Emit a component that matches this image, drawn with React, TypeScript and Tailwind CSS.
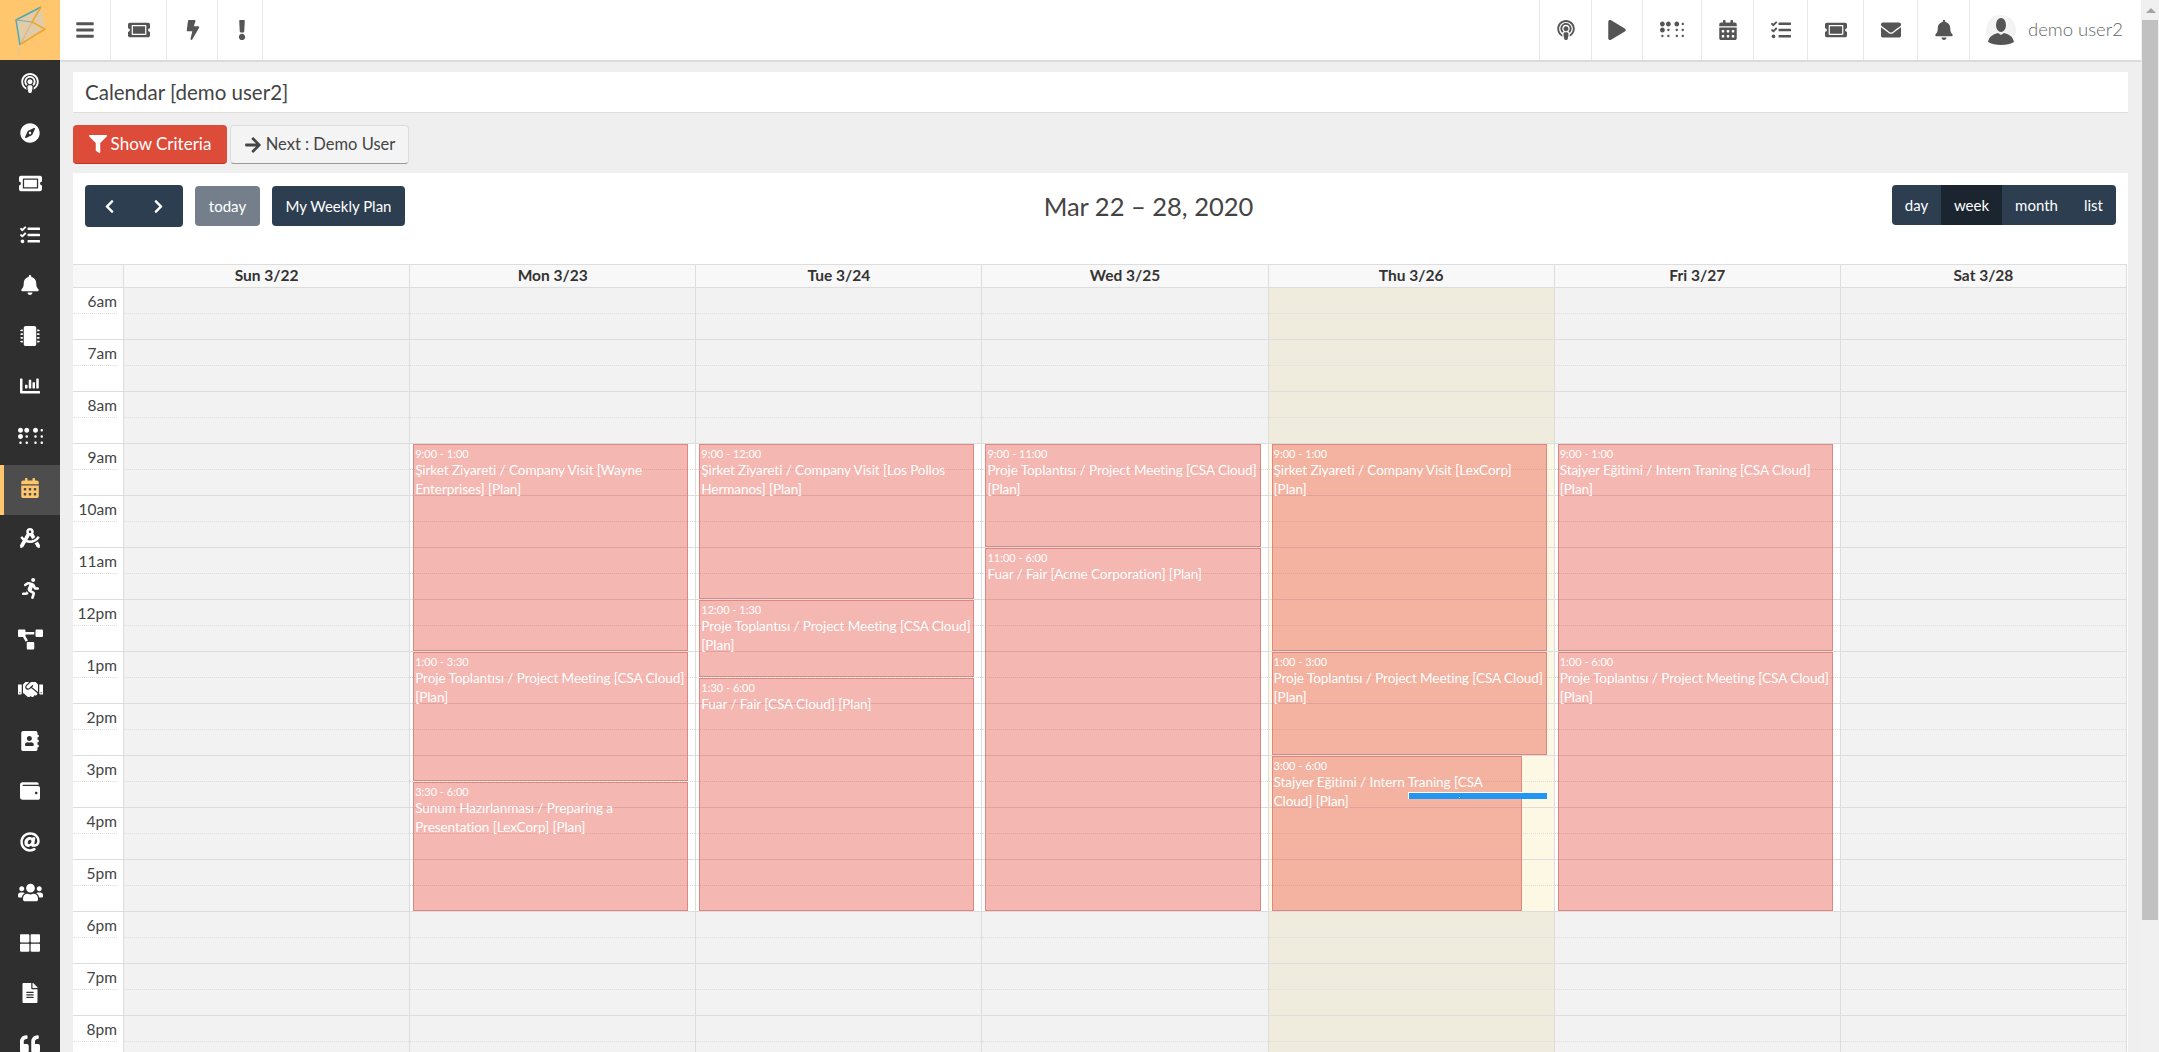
import React from "react";
import {
  FaAddressBook,
  FaArrowRight,
  FaAt,
  FaBars,
  FaBell,
  FaBolt,
  FaBraille,
  FaCalendarAlt,
  FaChartBar,
  FaChevronLeft,
  FaChevronRight,
  FaCompass,
  FaDraftingCompass,
  FaEnvelope,
  FaExclamation,
  FaFileAlt,
  FaFilter,
  FaHandshake,
  FaMicrochip,
  FaPlay,
  FaPodcast,
  FaProjectDiagram,
  FaQuoteLeft,
  FaRunning,
  FaTasks,
  FaThLarge,
  FaTicketAlt,
  FaUsers,
  FaWallet,
} from "react-icons/fa";

const HOUR = 52;

const sideIcons = [
  { Icon: FaPodcast, size: 20 },
  { Icon: FaCompass, size: 20 },
  { Icon: FaTicketAlt, size: 23 },
  { Icon: FaTasks, size: 20 },
  { Icon: FaBell, size: 20 },
  { Icon: FaMicrochip, size: 20 },
  { Icon: FaChartBar, size: 20 },
  { Icon: FaBraille, size: 25 },
  { Icon: FaCalendarAlt, size: 20 },
  { Icon: FaDraftingCompass, size: 20 },
  { Icon: FaRunning, size: 21 },
  { Icon: FaProjectDiagram, size: 25 },
  { Icon: FaHandshake, size: 25 },
  { Icon: FaAddressBook, size: 20 },
  { Icon: FaWallet, size: 20 },
  { Icon: FaAt, size: 20 },
  { Icon: FaUsers, size: 25 },
  { Icon: FaThLarge, size: 20 },
  { Icon: FaFileAlt, size: 20 },
  { Icon: FaQuoteLeft, size: 20 },
];

const rightIcons = [
  { Icon: FaPodcast, size: 20, w: 52 },
  { Icon: FaPlay, size: 20, w: 51 },
  { Icon: FaBraille, size: 24, w: 59 },
  { Icon: FaCalendarAlt, size: 20, w: 52 },
  { Icon: FaTasks, size: 20, w: 54 },
  { Icon: FaTicketAlt, size: 22, w: 56 },
  { Icon: FaEnvelope, size: 20, w: 54 },
  { Icon: FaBell, size: 20, w: 52 },
];

const hours = ["6am", "7am", "8am", "9am", "10am", "11am", "12pm", "1pm", "2pm", "3pm", "4pm", "5pm", "6pm", "7pm", "8pm"];

type Ev = { start: number; end: number; time: string; title: string; narrow?: boolean };
type Day = { label: string; business?: boolean; today?: boolean; events?: Ev[] };

const meeting = "Proje Toplantısı / Project Meeting [CSA Cloud]\n[Plan]";

const days: Day[] = [
  { label: "Sun 3/22" },
  {
    label: "Mon 3/23",
    business: true,
    events: [
      { start: 9, end: 13, time: "9:00 - 1:00", title: "Şirket Ziyareti / Company Visit [Wayne\nEnterprises] [Plan]" },
      { start: 13, end: 15.5, time: "1:00 - 3:30", title: meeting },
      { start: 15.5, end: 18, time: "3:30 - 6:00", title: "Sunum Hazırlanması / Preparing a\nPresentation [LexCorp] [Plan]" },
    ],
  },
  {
    label: "Tue 3/24",
    business: true,
    events: [
      { start: 9, end: 12, time: "9:00 - 12:00", title: "Şirket Ziyareti / Company Visit [Los Pollos\nHermanos] [Plan]" },
      { start: 12, end: 13.5, time: "12:00 - 1:30", title: meeting },
      { start: 13.5, end: 18, time: "1:30 - 6:00", title: "Fuar / Fair [CSA Cloud] [Plan]" },
    ],
  },
  {
    label: "Wed 3/25",
    business: true,
    events: [
      { start: 9, end: 11, time: "9:00 - 11:00", title: meeting },
      { start: 11, end: 18, time: "11:00 - 6:00", title: "Fuar / Fair [Acme Corporation] [Plan]" },
    ],
  },
  {
    label: "Thu 3/26",
    business: true,
    today: true,
    events: [
      { start: 9, end: 13, time: "9:00 - 1:00", title: "Şirket Ziyareti / Company Visit [LexCorp]\n[Plan]" },
      { start: 13, end: 15, time: "1:00 - 3:00", title: meeting },
      { start: 15, end: 18, time: "3:00 - 6:00", title: "Stajyer Eğitimi / Intern Traning [CSA\nCloud] [Plan]", narrow: true },
    ],
  },
  {
    label: "Fri 3/27",
    business: true,
    events: [
      { start: 9, end: 13, time: "9:00 - 1:00", title: "Stajyer Eğitimi / Intern Traning [CSA Cloud]\n[Plan]" },
      { start: 13, end: 18, time: "1:00 - 6:00", title: meeting },
    ],
  },
  { label: "Sat 3/28" },
];

function Logo() {
  return (
    <svg width="60" height="60" viewBox="0 0 60 60" fill="none">
      <path d="M41 7 16 20 20 45 45 29Z" fill="#d8cdb8" fillOpacity="0.8" />
      <path d="M45 29 20 45 18 57" stroke="#e6c79a" strokeWidth="1.5" />
      <path d="M32 22 20 45" stroke="#d9b98c" strokeWidth="1.5" />
      <path d="M41 7 16 20 20 45" stroke="#4fa8b5" strokeWidth="1.5" />
      <path d="M16 20 32 22" stroke="#8fa89a" strokeWidth="1.2" />
      <path d="M41 7 32 22 45 29 21 44" stroke="#f0a526" strokeWidth="1.5" />
    </svg>
  );
}

function Avatar() {
  return (
    <svg width="30" height="30" viewBox="0 0 30 30">
      <circle cx="15" cy="15" r="15" fill="#f3f3f3" />
      <ellipse cx="15" cy="10" rx="5" ry="7" fill="#555" />
      <path d="M2 27c1-6 6-8 10-9l3 2 3-2c4 1 9 3 10 9-3 2-8 3-13 3s-10-1-13-3Z" fill="#555" />
    </svg>
  );
}

function Sidebar() {
  return (
    <aside className="flex w-[60px] shrink-0 flex-col bg-[#2f2f2f]">
      <div className="h-[60px] shrink-0 bg-[#ffc66d]">
        <Logo />
      </div>
      {sideIcons.map(({ Icon, size }, i) => (
        <div
          key={i}
          className={
            i === 8
              ? "flex h-[50.6px] shrink-0 items-center justify-center border-l-4 border-[#ffc66d] bg-[#4d4d4d] pr-1 pb-[5px] text-[#ffc66d]"
              : "flex h-[50.6px] shrink-0 items-center justify-center pb-[5px] text-white"
          }
        >
          <Icon size={size} />
        </div>
      ))}
    </aside>
  );
}

function TopBar() {
  return (
    <header className="flex h-[62px] shrink-0 items-stretch border-b-2 border-[#dcdcdc] bg-white text-[#555]">
      <div className="flex h-[60px] w-[51px] items-center justify-center border-r border-[#e8e8e8]">
        <FaBars size={20} />
      </div>
      <div className="flex h-[60px] w-[56px] items-center justify-center border-r border-[#e8e8e8]">
        <FaTicketAlt size={22} />
      </div>
      <div className="flex h-[60px] w-[51px] items-center justify-center border-r border-[#e8e8e8] pl-[2px]">
        <FaBolt size={20} />
      </div>
      <div className="flex h-[60px] w-[45px] items-center justify-center border-r border-[#e8e8e8] pl-[4px]">
        <FaExclamation size={20} />
      </div>
      <div className="flex-1" />
      <div className="flex h-[60px] border-l border-[#e8e8e8]">
        {rightIcons.map(({ Icon, size, w }, i) => (
          <div key={i} className="flex items-center justify-center border-r border-[#e8e8e8]" style={{ width: w }}>
            <Icon size={size} />
          </div>
        ))}
        <div className="flex w-[171px] items-center gap-[12px] pl-[16px]">
          <Avatar />
          <span className="text-[18.5px] font-light text-[#666]">demo user2</span>
        </div>
      </div>
    </header>
  );
}

function Toolbar() {
  return (
    <div className="flex h-[91px] items-start justify-between pl-3 pr-[11px] pt-3">
      <div className="flex items-center gap-3">
        <div className="flex h-[42px] w-[98px] items-center rounded bg-[#2c3e50] text-white">
          <span className="flex w-[49px] justify-center"><FaChevronLeft size={15} /></span>
          <span className="flex w-[49px] justify-center"><FaChevronRight size={15} /></span>
        </div>
        <div className="flex h-10 w-[65px] items-center justify-center rounded bg-[#757f8b] text-[15px] text-white">today</div>
        <div className="flex h-10 w-[133px] items-center justify-center rounded bg-[#2c3e50] text-[15px] text-white">My Weekly Plan</div>
      </div>
      <h2 className="pt-[2px] text-[25.5px] leading-[38px] text-[#444]">Mar 22 – 28, 2020</h2>
      <div className="flex h-10 items-center overflow-hidden rounded bg-[#2c3e50] text-[15px] text-white">
        <span className="flex h-full w-[49px] items-center justify-center">day</span>
        <span className="flex h-full w-[61px] items-center justify-center bg-[#1a252f]">week</span>
        <span className="flex h-full w-[69px] items-center justify-center">month</span>
        <span className="flex h-full w-[45px] items-center justify-center">list</span>
      </div>
    </div>
  );
}

function Slots({ business, today }: { business?: boolean; today?: boolean }) {
  return (
    <>
      {hours.map((h, i) => {
        const open = business && i >= 3 && i < 12;
        let bg = open ? "bg-white" : "bg-[#f2f2f2]";
        if (today) bg = open ? "bg-[#fcf8e3]" : "bg-[#f0ecdd]";
        return (
          <div key={h} className={"h-[52px] border-b border-[#dddddd] " + bg}>
            <div className="h-[26px] border-b border-dotted border-[#dddddd]" />
          </div>
        );
      })}
    </>
  );
}

function EventBox({ ev }: { ev: Ev }) {
  return (
    <div
      className={
        "absolute left-[3px] overflow-hidden border border-[#dc8780] bg-[#e74c3c]/40 pl-px text-white " +
        (ev.narrow ? "right-[32px]" : "right-[7px]")
      }
      style={{ top: (ev.start - 6) * HOUR, height: (ev.end - ev.start) * HOUR - 1 }}
    >
      <div className="pt-px text-[11px] leading-[15px]">{ev.time}</div>
      <div className="whitespace-pre text-[13.6px] leading-[19px] tracking-[-0.1px]">{ev.title}</div>
    </div>
  );
}

function Calendar() {
  return (
    <div className="grid grid-cols-[51px_repeat(7,minmax(0,1fr))] border-t border-[#dddddd]">
      <div className="h-[23px] border-b border-r border-[#dddddd] bg-[#f8f8f8]" />
      {days.map((d) => (
        <div key={d.label} className="flex h-[23px] items-center justify-center border-b border-r border-[#dddddd] bg-[#f8f8f8] text-[15.5px] font-bold text-[#333]">
          {d.label}
        </div>
      ))}
      <div className="border-r border-[#dddddd]">
        {hours.map((h) => (
          <div key={h} className="h-[52px] border-b border-[#dddddd] pr-[6px] text-right text-[15.5px] leading-[26px] text-[#444]">
            <div className="h-[26px] border-b border-dotted border-[#dddddd]">{h}</div>
          </div>
        ))}
      </div>
      {days.map((d) => (
        <div key={d.label} className="relative border-r border-[#dddddd]">
          <Slots business={d.business} today={d.today} />
          {d.events?.map((ev) => <EventBox key={ev.time} ev={ev} />)}
          {d.today && (
            <div className="absolute left-[139px] right-[7px] top-[504px] h-[7px] border-l border-t border-white bg-[#2196f3]">
              <div className="ml-[50px] mt-[4px] h-px w-px bg-white" />
            </div>
          )}
        </div>
      ))}
    </div>
  );
}

function ScrollTrack() {
  return (
    <div className="flex h-full w-[18px] shrink-0 flex-col bg-[#f0f0f0]">
      <div className="flex h-[20px] items-center justify-center pl-px">
        <div className="h-0 w-0 border-x-[5px] border-b-[5px] border-x-transparent border-b-[#a3a3a3]" />
      </div>
      <div className="ml-[1px] h-[900px] w-4 bg-[#c1c1c1]" />
    </div>
  );
}

export default function App() {
  return (
    <div className="flex h-screen overflow-hidden bg-[#efefef] font-['Lato',sans-serif] text-[#333]">
      <Sidebar />
      <div className="flex min-w-0 flex-1">
        <div className="flex min-w-0 flex-1 flex-col">
          <TopBar />
          <main className="px-[13px] pt-[10px]">
            <div className="flex h-[41px] items-center border-b border-[#dddddd] bg-white px-3 text-[20.5px] text-[#444]">
              Calendar [demo user2]
            </div>
            <div className="mt-3 flex gap-[3px]">
              <button className="flex h-[39px] w-[154px] items-center justify-center gap-1 rounded-sm border-b border-[#c23321] bg-[#dd4b39] text-[17px] text-white">
                <FaFilter size={18} />
                Show Criteria
              </button>
              <button className="flex h-[39px] w-[179px] items-center justify-center gap-1 rounded-sm border border-[#dddddd] border-b-[#999] bg-[#f4f4f4] text-[16.5px] text-[#444]">
                <FaArrowRight size={18} />
                Next : Demo User
              </button>
            </div>
            <div className="mt-[9px] bg-white pr-px">
              <Toolbar />
              <Calendar />
            </div>
          </main>
        </div>
        <ScrollTrack />
      </div>
    </div>
  );
}
